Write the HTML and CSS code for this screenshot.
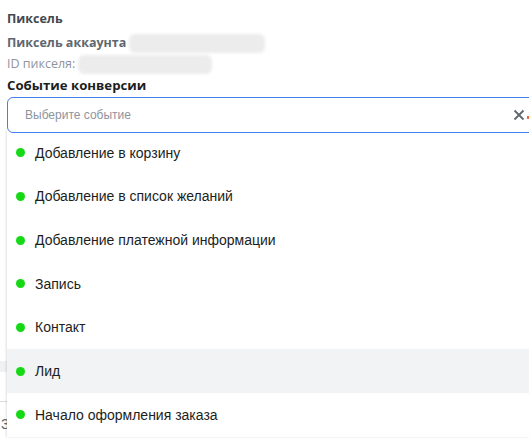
FILE: index.html
```html
<!DOCTYPE html>
<html lang="ru">
<head>
<meta charset="utf-8">
<title>Пиксель</title>
<link rel="stylesheet" href="styles.css">
</head>
<body>
<div class="panel">
  <div class="title">Пиксель</div>
  <div class="row-info bold-gray">Пиксель аккаунта<span class="blur blur-a"></span></div>
  <div class="row-info light-gray">ID пикселя: <span class="blur blur-b"></span></div>
  <div class="label">Событие конверсии</div>
  <div class="field-wrap">
    <div class="field">
      <span class="placeholder">Выберите событие</span>
      <span class="clear">
        <svg width="12" height="12" viewBox="0 0 12 12"><path d="M1.5 1.5 L10.5 10.5 M10.5 1.5 L1.5 10.5" stroke="#606770" stroke-width="1.8" fill="none"/></svg>
      </span>
      <span class="caret"></span>
    </div>
    <ul class="menu">
      <li class="item"><span class="dot"></span>Добавление в корзину</li>
      <li class="item"><span class="dot"></span>Добавление в список желаний</li>
      <li class="item"><span class="dot"></span>Добавление платежной информации</li>
      <li class="item"><span class="dot"></span>Запись</li>
      <li class="item"><span class="dot"></span>Контакт</li>
      <li class="item active"><span class="dot"></span>Лид</li>
      <li class="item"><span class="dot"></span>Начало оформления заказа</li>
    </ul>
  </div>
  <div class="under">
    <div class="under-bar"></div>
    <div class="under-line"></div>
    <div class="under-text">З</div>
  </div>
</div>
</body>
</html>
```
FILE: styles.css
```css
html, body {
  margin: 0;
  padding: 0;
  background: #fff;
  overflow: hidden;
}
body {
  font-family: "Liberation Sans", Arial, sans-serif;
  width: 529px;
  height: 447px;
}
.panel {
  padding: 11px 0 0 7px;
}
.title {
  font-family: "Open Sans", "Liberation Sans", sans-serif;
  font-size: 12.5px;
  font-weight: bold;
  color: #444950;
  line-height: 16px;
  height: 21px;
}
.row-info {
  font-family: "Open Sans", "Liberation Sans", sans-serif;
  font-size: 12.5px;
  line-height: 16px;
  display: flex;
  align-items: center;
}
.bold-gray {
  font-weight: bold;
  color: #606770;
  height: 22px;
}
.light-gray {
  color: #90949c;
  height: 20px;
}
.blur {
  display: inline-block;
  background: #ececec;
  border-radius: 6px;
  filter: blur(1.5px);
}
.blur-a {
  width: 136px;
  height: 19px;
  margin-left: 3px;
}
.blur-b {
  width: 134px;
  height: 19px;
  margin-left: 3px;
}
.label {
  font-family: "Open Sans", "Liberation Sans", sans-serif;
  font-size: 13.2px;
  font-weight: bold;
  color: #1c1e21;
  line-height: 16px;
  height: 21px;
  display: flex;
  align-items: center;
}
.field-wrap {
  position: relative;
  margin-top: 2px;
}
.field {
  position: relative;
  z-index: 2;
  box-sizing: border-box;
  height: 36px;
  width: 540px;
  border: 1px solid #4080f0;
  border-radius: 6px;
  background: #fff;
  display: flex;
  align-items: center;
  padding-left: 17px;
}
.placeholder {
  font-size: 12px;
  color: #8d949e;
  flex: 1;
}
.clear {
  display: flex;
  align-items: center;
  margin-right: 2px;
}
.caret {
  width: 3px;
  height: 3px;
  background: #f26b3a;
  margin-right: 16px;
  margin-top: 4px;
}
.menu {
  position: absolute;
  z-index: 1;
  left: 0;
  top: 34px;
  width: 560px;
  margin: 0;
  padding: 0;
  list-style: none;
  background: #fff;
  box-shadow: -1px 0 2px rgba(0, 0, 0, 0.12);
}
.item {
  height: 43.67px;
  display: flex;
  align-items: center;
  padding-left: 9px;
  font-size: 14px;
  color: #1c1e21;
}
.item.active {
  background: #f2f3f5;
}
.dot {
  width: 9px;
  height: 9px;
  border-radius: 50%;
  background: #16d916;
  margin-right: 10px;
}
.under {
  margin-left: -7px;
  padding-top: 228px;
}
.under-bar {
  height: 11px;
  background: #f0f1f2;
}
.under-line {
  margin-top: 29px;
  height: 1px;
  background: #dadde1;
}
.under-text {
  margin-top: 14px;
  font-size: 14px;
  color: #606770;
  padding-left: 1px;
}
```
